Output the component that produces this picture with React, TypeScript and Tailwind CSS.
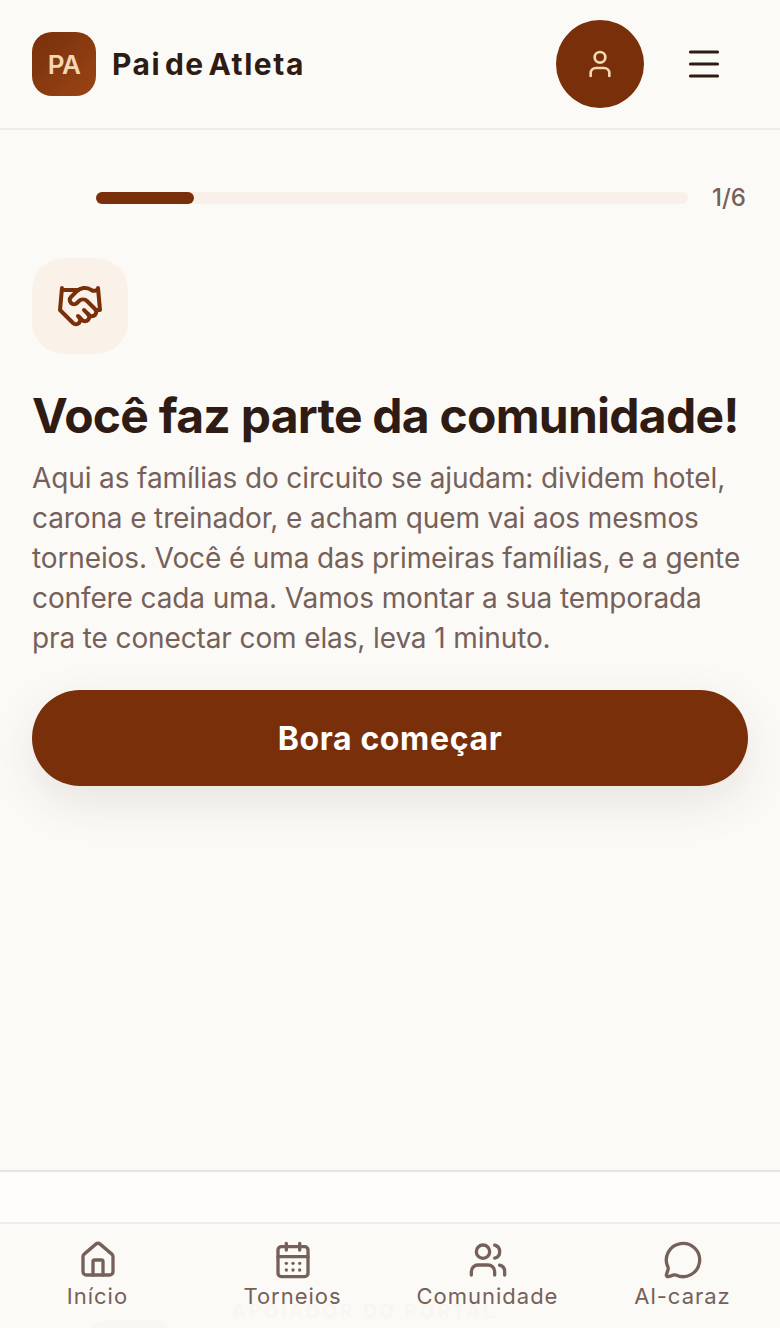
import { CalendarDays, Handshake, House, MessageCircle, User, Users } from 'lucide-react';

const navItems = [
  { label: 'Início', icon: House },
  { label: 'Torneios', icon: CalendarDays },
  { label: 'Comunidade', icon: Users },
  { label: 'Al-caraz', icon: MessageCircle },
];

const Header = () => (
  <header className="h-[130px] shrink-0 flex items-center justify-between pl-8 pr-[36px] border-b-2 border-[#f0ebe6]">
    <div className="flex items-center gap-4">
      <div className="w-16 h-16 rounded-[20px] bg-gradient-to-br from-[#78300a] to-[#9a4416] flex items-center justify-center text-[#f5d7b5] font-semibold text-[26px] tracking-tight">
        PA
      </div>
      <span className="text-[30px] font-bold tracking-[1.55px] [word-spacing:-5px] text-[#2e1c14]">Pai de Atleta</span>
    </div>
    <div className="flex items-center gap-[20px]">
      <button className="w-[88px] h-[88px] rounded-full bg-[#792f09] flex items-center justify-center text-[#f5d7b5]">
        <User size={32} strokeWidth={2} />
      </button>
      <button className="w-[80px] h-[80px] flex items-center justify-center text-[#2e1c14]">
        <svg width="48" height="48" viewBox="0 0 48 48" fill="none" stroke="currentColor" strokeWidth="3.2" strokeLinecap="round">
          <path d="M10.5 12h27M10.5 24h27M10.5 36h27" />
        </svg>
      </button>
    </div>
  </header>
);

const BottomNav = () => (
  <div className="shrink-0">
    <div className="h-[54px] bg-[#fefdfb] border-y-2 border-t-[#e9e3dd] border-b-[#f0ebe6]" />
    <nav className="relative h-[104px] grid grid-cols-4 pt-[16px]">
      {/* page content showing faintly through the bar */}
      <span className="absolute left-[232px] top-[80px] text-[19px] leading-[16px] tracking-[0.15em] font-semibold text-[#f9f6f2] whitespace-nowrap">
        APOIADOR DO PORTAL
      </span>
      <div className="absolute left-[84px] top-[96px] w-[92px] h-6 rounded-t-full bg-[#faf7f3]" />
      {navItems.map(({ label, icon: Icon }) => (
        <div key={label} className="relative flex flex-col items-center text-[#75615a]">
          <Icon size={40} strokeWidth={2} />
          <span className="mt-[6px] text-[22px] leading-[20px] tracking-[0.045em]">{label}</span>
        </div>
      ))}
    </nav>
  </div>
);

export default function App() {
  return (
    <div className="w-[780px] h-[1328px] flex flex-col overflow-hidden bg-[#fcfaf7] font-['Inter',sans-serif]">
      <Header />
      <main className="flex-1 px-8 pt-[56px]">
        <div className="flex items-center gap-6 pl-16">
          <div className="flex-1 h-3 rounded-full bg-[#f9f0ea]">
            <div className="w-[98px] h-3 rounded-full bg-[#792f09]" />
          </div>
          <span className="text-[24px] font-medium text-[#75615a] w-[36px] leading-none">1/6</span>
        </div>
        <div className="mt-[48px] w-24 h-24 rounded-[32px] bg-[#faf2e9] flex items-center justify-center text-[#792f09]">
          <Handshake size={48} strokeWidth={2} />
        </div>
        <h1 className="mt-[32px] text-[48px] leading-[60px] font-bold tracking-[-0.75px] text-[#2e1c14] whitespace-nowrap">
          Você faz parte da comunidade!
        </h1>
        <p className="mt-[12px] text-[28px] leading-[40px] tracking-[-0.12px] text-[#75615a]">
          Aqui as famílias do circuito se ajudam: dividem hotel, carona e treinador, e acham quem vai aos mesmos torneios. Você é uma das primeiras famílias, e a gente confere cada uma. Vamos montar a sua temporada pra te conectar com elas, leva 1 minuto.
        </p>
        <button className="mt-[32px] w-full h-24 pt-0.5 rounded-full bg-[#792f09] text-white text-[32px] font-bold tracking-[0.02em] shadow-[0_16px_48px_rgba(46,28,20,0.1)]">
          Bora começar
        </button>
      </main>
      <BottomNav />
    </div>
  );
}
